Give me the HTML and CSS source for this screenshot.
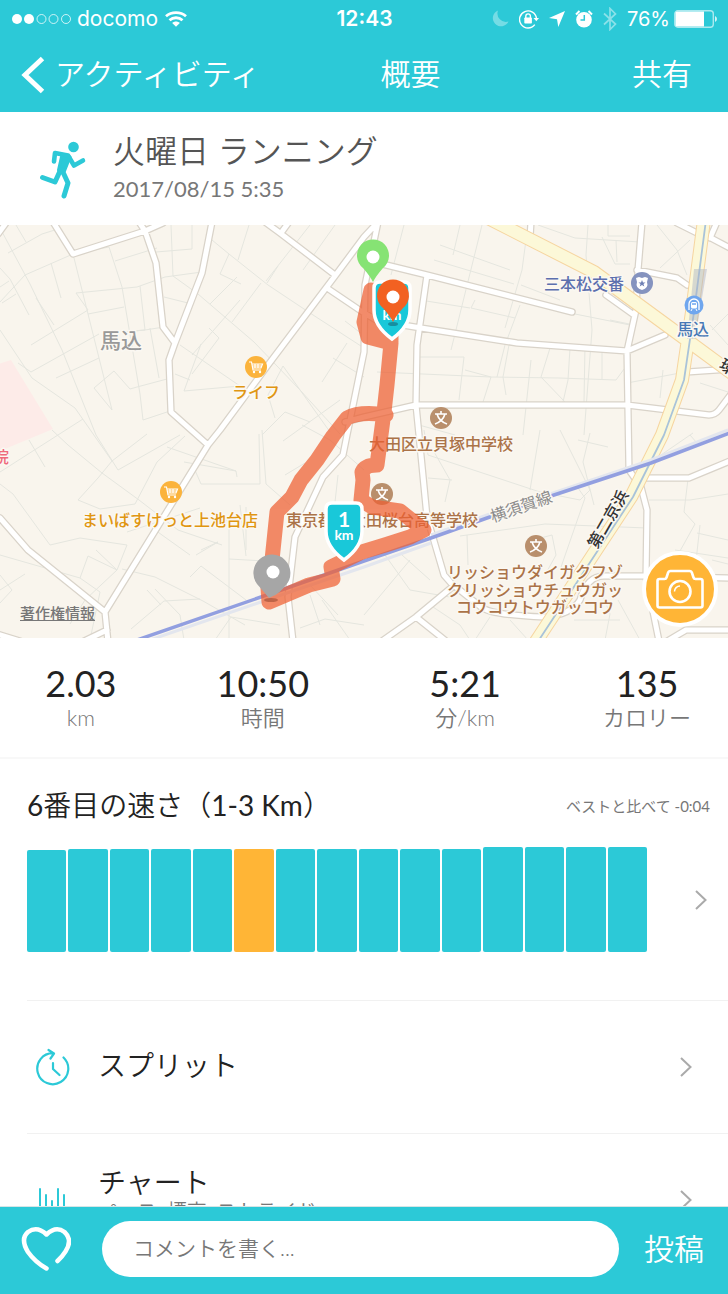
FILE: index.html
```html
<!DOCTYPE html>
<html lang="ja">
<head>
    <meta charset="UTF-8">
    <meta name="viewport" content="width=device-width, initial-scale=1.0">
    <title>概要</title>
    <link rel="stylesheet" href="styles.css">
</head>
<body>
    <header class="header">
        <div class="status-bar">
            <div class="status-left">
                <svg class="signal" width="60" height="12" viewBox="0 0 60 12">
                    <g fill="#fff"><circle cx="5" cy="6" r="5"/><circle cx="17" cy="6" r="5"/></g>
                    <g fill="none" stroke="#fff" stroke-opacity=".75"><circle cx="29.500" cy="6" r="4.500"/><circle cx="41.500" cy="6" r="4.500"/><circle cx="54" cy="6" r="4.500"/></g>
                </svg>
                <span>docomo</span>
                <svg class="wifi" width="22" height="16" viewBox="0 0 22 16" fill="none" stroke="#fff" stroke-width="2.800">
                    <path d="M1 5.200C6.500 .4 15.500 .4 21 5.200M4.500 9.300C8.200 5.900 13.800 5.900 17.500 9.300"/>
                    <path d="M11 15.800L7.200 12C9.300 10 12.700 10 14.800 12Z" fill="#fff" stroke="none"/>
                </svg>
            </div>
            <span class="time">12:43</span>
            <div class="status-right">
                <svg width="17" height="17" viewBox="0 0 17 17"><path d="M6 .5A8.200 8.200 0 1 0 16.500 11.500A8.500 8.500 0 0 1 6 .5Z" fill="#fff" opacity=".35"/></svg>
                <svg width="20" height="20" viewBox="0 0 20 20">
                    <path d="M15.800 15.600A8.500 8.500 0 1 1 17.500 9.500" fill="none" stroke="#fff" stroke-width="1.400"/>
                    <path d="M14.500 9H20L17.300 12.300Z" fill="#fff"/>
                    <rect x="5.300" y="8.500" width="7.600" height="6" rx=".8" fill="#fff"/>
                    <path d="M6.800 9V7.200a2.300 2.300 0 0 1 4.600 0V9" fill="none" stroke="#fff" stroke-width="1.400"/>
                </svg>
                <svg width="16" height="16" viewBox="0 0 16 16"><path d="M16 0L9.300 16L8 8.200L0 7Z" fill="#fff"/></svg>
                <svg width="18" height="18" viewBox="0 0 18 18">
                    <circle cx="9" cy="9.800" r="7.800" fill="#fff"/>
                    <path d="M1 4.500L4.500 1M17 4.500L13.500 1" stroke="#fff" stroke-width="2"/>
                    <path d="M9.300 5V10H5.500" fill="none" stroke="#2cc9d7" stroke-width="1.500"/>
                </svg>
                <svg width="14" height="24" viewBox="0 0 14 24"><path d="M1 6.500L12.500 17L7 22.500V1.500L12.500 7L1 17.500" fill="none" stroke="#fff" stroke-width="1.700" opacity=".45"/></svg>
                <span class="percent">76%</span>
                <svg width="43" height="18" viewBox="0 0 43 18">
                    <rect x=".8" y=".8" width="38.500" height="16.400" rx="3" fill="none" stroke="#fff" stroke-opacity=".6" stroke-width="1.400"/>
                    <path d="M3 1.500H30V16.500H3Q1.500 16.500 1.500 15V3Q1.500 1.500 3 1.500Z" fill="#fff"/>
                    <path d="M41 6Q43 7 43 9T41 12Z" fill="#fff" opacity=".8"/>
                </svg>
            </div>
        </div>
        <nav class="nav">
            <a class="back" href="#activity">
                <svg width="24" height="38" viewBox="0 0 24 38"><path d="M21.500 2.500L4 19L21.500 35.500" fill="none" stroke="#fff" stroke-width="5"/></svg>
                <span class="nav-label">アクティビティ</span>
            </a>
            <h1 class="nav-label">概要</h1>
            <button class="share nav-label" type="button">共有</button>
        </nav>
    </header>

    <main class="content">
        <section class="activity">
            <svg class="runner" width="48" height="60" viewBox="0 0 48 60" fill="none" stroke="#2cc9d7" stroke-linecap="round" stroke-linejoin="round">
                <circle cx="33.500" cy="8" r="5.300" fill="#2cc9d7" stroke="none"/>
                <path d="M14 22.500L15 14L28 16.500L34 26.500L43 21.500" stroke-width="4.600"/>
                <path d="M22 15.500L30 18L24.500 32L18.500 31Z" fill="#2cc9d7" stroke-width="3"/>
                <path d="M20.500 31L15 43L2.500 38.500M22 31L28 44L24 57" stroke-width="5"/>
            </svg>
            <div>
                <h2>火曜日 ランニング</h2>
                <p class="date">2017/08/15 5:35</p>
            </div>
        </section>

        <section class="map">
            <svg class="map-canvas" viewBox="0 225 728 413" preserveAspectRatio="xMidYMid slice">
                <rect y="225" width="728" height="413" fill="#f9f5ed"/>
                <path d="M-2 364L11 360L53 429L0 451Z" fill="#fdebe8"/>

                <!-- small streets -->
                <g fill="none" stroke="#e5e6df">
                    <path d="M0 228L30 284L62 350L96 435L118 470M0 302L25 275L73 254L109 247M16 225L26 242M8 253L42 234L58 229M0 268L10 279L29 315M2 303L16 294M9 281L0 287M31 345L88 310L76 293L137 287L165 277L202 272M0 330L32 378L75 408L112 461L147 434M51 263L61 298M73 254L112 410L94 388L114 371L130 389L137 387L167 379M109 247L122 287L140 394L143 420L170 411M115 261L157 248M88 314L124 307M18 363L31 372L99 334M54 325L36 298M56 378L99 358M140 286L145 330L122 332L145 330L164 327M150 328L159 378M164 297L188 303M171 225L173 276L198 294L254 342L300 390L340 434M192 225V249L156 252M212 240L229 254L220 274L241 284M249 225L238 260M229 254L268 285L310 313L364 348M237 277L210 304M261 283L232 322M278 266L267 283M310 225L266 281M335 225L303 270M175 374L190 380M180 345L240 386L184 391L201 344M209 328L219 338L192 374M240 300L192 355M283 366L330 432M283 366L268 395L275 418M262 435L285 412L310 422M347 343L322 382M345 321L362 334M333 358L364 377"/>
                    <path d="M0 484L13 494L50 545L80 538L127 545L117 570L88 556L80 578L0 555M29 440L45 467M0 472L83 419M52 430L68 445L102 473L139 500L178 530L222 545M78 500L100 509L135 504L157 462L185 436M112 461L98 478L78 500M118 470L180 435M184 462L236 471L237 477M167 447L236 471M194 468L201 484H260L259 434M262 430L266 484L290 505M211 511L229 522V640M240 505L246 556M201 550L218 542L196 555M190 577L201 566L246 600M127 532L200 508M122 569L155 577L203 601L245 625M96 550L117 570L85 600L70 624M80 578L100 592L90 640M0 590L25 574M0 603L12 590L0 575M131 629L164 601L200 599M155 530L190 555M155 589L180 615L184 640M161 605L147 590M215 640L231 617L280 625M246 507V550M229 559L265 561M302 425L330 440L364 470M283 441L340 400M285 475L305 463"/>
                    <path d="M404 225L391 275M440 245L510 270M434 260L514 284M482 225L451 350M505 328L522 270L528 225M521 285L560 300M570 313L630 325M538 225L575 238L640 242M588 225L586 255L592 330L584 435M608 225V236H630M602 237L615 264H630M616 240L617 262M471 308L515 318M475 300L471 308M520 305L505 345L497 377M419 357H464L459 400M465 370L491 377L559 378L616 380L627 365M377 372L491 377L483 402M509 345L503 377L506 395M550 348L541 377L565 402M570 348L568 380L563 402M585 345L584 402M602 350V380M627 383L680 373M610 320L634 325M663 370L660 398M657 225L677 250L687 275M690 240L660 268M419 425L455 435M710 325L728 345M712 330L728 314M700 383L728 392M460 225L453 255M531 360L523 435M420 300L470 308"/>
                    <path d="M424 430L428 455L540 492L580 500L590 490L560 430M433 450L450 480L445 502M428 478L452 480M590 433L583 462L594 505M540 430L530 490M578 440L608 447M467 535L468 565M460 536L545 524L647 528M364 615L410 560M385 555L410 590L450 597M402 555L430 580M533 540L552 535L556 555L545 575M578 488L585 498L560 570M661 455L693 433M649 500H690L728 494M688 479L684 512L695 524L675 560M697 533L728 540M700 525L695 570M675 550L728 558M690 435L697 443L728 430M712 560L728 564M574 620H620M600 588L610 614L605 640M618 600L640 640M490 617L475 640M510 620L528 640M430 605L460 625L470 640M300 628L325 619L364 625M322 600L350 640M310 595L320 625M310 585L338 615M338 475L333 520M340 520L364 530"/>
                </g>

                <!-- main streets, grey casing under white -->
                <defs>
                    <path id="roads" d="M6 223L-2 234M53 222L73 254L145 231L163 223M139 222L145 231L156 263L163 327L175 343L169 360L171 412L208 445M212 222L202 273L175 343M378 222L364 237L335 276L268 365L220 430L208 445L105 612L108 642M0 518L28 550L105 612M-3 634L20 641M80 643L107 630M265 222L280 233L335 275M289 222L281 233M327 288L364 313L378 321L421 328L517 343L627 351L665 335M374 262L427 275L572 312M427 275L417 345L416 405L419 435L427 517L444 575L451 583L481 607Q491 615 544 617Q571 615 580 600Q587 576 604 576H647L728 578M345 422L364 417L416 405H627L709 415Q715 415 719 410L732 393M642 222L638 270L636 310L627 351L629 470L641 487L647 510L646 577L659 641M606 295L634 315M637 270L677 278L687 285M677 223L697 233M709 237L730 248M717 222L710 238M687 372L730 369M531 222L530 238M646 478H689L730 461M382 641L416 617L451 588M416 617L446 641M664 643L686 630H730M378 222L365 285L364 352L347 435L343 455L323 477L295 537L288 597L293 641"/>
                    <path id="highways" d="M486 217L594 272L684 338L737 377M704 220L692 312L682 380L662 435L631 497L535 643"/>
                </defs>
                <g fill="none" stroke-linecap="round" stroke-linejoin="round">
                    <use href="#roads" stroke="#d9d3c9" stroke-width="7.500"/>
                    <use href="#roads" stroke="#fff" stroke-width="5"/>
                    <use href="#highways" stroke="#f6d5a0" stroke-width="14"/>
                    <use href="#highways" stroke="#fcf8d8" stroke-width="12"/>
                    <path d="M706 220L694 312L684 380L664 435L633 497L537 643" stroke="#a9c3d9" stroke-width="1.800"/>
                </g>
                <path d="M694 269H707L695 339H687Z" fill="#a9b2c5" opacity=".45"/>

                <!-- railway -->
                <path d="M150 640L287 593L364 567L431 543M431 535L487 515L651 460L728 430" fill="none" stroke="#e3e6ee" stroke-width="3"/>
                <path d="M137 640L287 588L364 561L431 538L487 518L554 495L651 463L732 432" fill="none" stroke="#929fe0" stroke-width="3.500"/>

                <g class="map-text">
                    <text class="place" x="121" y="348">馬込</text>
                    <text class="shop" x="256" y="398">ライフ</text>
                    <text class="shop" x="170" y="526">まいばすけっと上池台店</text>
                    <text class="police" x="584" y="290">三本松交番</text>
                    <text class="station" x="693" y="335">馬込</text>
                    <text class="school" x="441" y="450">大田区立貝塚中学校</text>
                    <text class="school" x="382" y="526">東京都立大田桜台高等学校</text>
                    <text class="school" x="535" y="578">リッショウダイガクフゾ</text>
                    <text class="school" x="535" y="596">クリッショウチュウガッ</text>
                    <text class="school" x="535" y="613">コウコウトウガッコウ</text>
                    <text class="hospital" x="1" y="463">院</text>
                    <text class="rail" transform="translate(523 512) rotate(-19)">横須賀線</text>
                    <text class="highway" transform="translate(613 522) rotate(-60)">第二京浜</text>
                    <text class="highway" transform="translate(725 372) rotate(30)">環</text>
                </g>

                <!-- points of interest -->
                <defs>
                    <g id="shop">
                        <circle r="11" fill="#fbb33c"/>
                        <path d="M-7 -5H-4.500L-3 3H5M-4 -3H6.500L5 1H-3M-1 -3V1M2 -3V1M-4 -1H6" fill="none" stroke="#fff" stroke-width="1.200"/>
                        <circle cx="-2" cy="5" r="1.200" fill="#fff"/><circle cx="4" cy="5" r="1.200" fill="#fff"/>
                    </g>
                    <g id="school">
                        <circle r="11" fill="#b98f6c"/>
                        <path d="M0 -7V-4M-6 -4H6M-4 -4Q-2 3 6 6M4 -4Q2 3 -6 6" fill="none" stroke="#fff" stroke-width="1.600"/>
                    </g>
                </defs>
                <use href="#shop" x="256" y="367"/>
                <use href="#shop" x="171" y="492"/>
                <use href="#school" x="441" y="418"/>
                <use href="#school" x="382" y="494"/>
                <use href="#school" x="536" y="546"/>
                <g transform="translate(642 283)">
                    <circle r="11" fill="#8593bf"/>
                    <path d="M-6 -5L-3 -6L0 -5L3 -6L6 -5L5 -1Q7 5 0 7Q-7 5 -5 -1Z" fill="#fff"/>
                    <path d="M0 -3L1 -.5H3.500L1.500 1L2.300 3.500L0 2L-2.300 3.500L-1.500 1L-3.500 -.5H-1Z" fill="#6f80b4"/>
                </g>
                <g transform="translate(694 305)">
                    <circle r="9.500" fill="#6fa6ee"/>
                    <path d="M-5 5V-1A5 5 0 0 1 5 -1V5" fill="none" stroke="#fff" stroke-width="1.300"/>
                    <rect x="-3" y="-3" width="6" height="6.500" rx="1.500" fill="#fff"/>
                    <path d="M-2 -1H2" stroke="#6fa6ee" stroke-width="1.500"/>
                    <path d="M-2 4L-3 6M2 4L3 6" stroke="#fff"/>
                </g>

                <!-- run track -->
                <g fill="none" stroke="#ee5f32" stroke-width="15" stroke-linejoin="round" stroke-linecap="round" opacity=".72">
                    <path d="M371 290L364 322L368 337L391 343L387 385L384 412L377 465Q365 465 362 472L363 480L361 500L372 507L400 511L424 530L410 537L385 545L362 552L331 567L333 579L309 585L269 602L268 588L272 560L277 512L292 497L301 480L317 460L333 436L347 418Q360 411 386 415"/>
                    <path d="M375 290L374 322L391 340V315"/>
                </g>

                <!-- kilometre shields and pins -->
                <defs>
                    <path id="shield" d="M-12 -28H12Q18 -28 18 -22V0Q18 16 0 29Q-18 16 -18 0V-22Q-18 -28 -12 -28Z" fill="#19c8d9" stroke="#fff" stroke-width="3.500"/>
                    <path id="pin" d="M0 25Q-3 19 -10 11A16 16 0 1 1 10 11Q3 19 0 25Z"/>
                </defs>
                <g class="shield-text">
                    <use href="#shield" x="344" y="531"/>
                    <text class="number" x="344" y="527">1</text>
                    <text class="unit" x="344" y="540">km</text>
                    <use href="#shield" x="392" y="310"/>
                    <text class="unit" x="392" y="320">km</text>
                </g>
                <ellipse cx="393" cy="324" rx="5" ry="2" fill="#168fa0"/>
                <ellipse cx="271" cy="600" rx="7" ry="2" fill="#9d4c34" opacity=".6"/>
                <use href="#pin" x="373" y="257" fill="#86e374"/>
                <circle cx="373" cy="257" r="6.500" fill="#fff"/>
                <use href="#pin" x="393" y="297" fill="#f26122"/>
                <circle cx="393" cy="297" r="6.500" fill="#fff"/>
                <path d="M269 598Q264 592 257 584A18.500 18.500 0 1 1 286 585Q279 594 273 596Z" fill="#a6a6a6"/>
                <circle cx="273" cy="572" r="6.500" fill="#fff"/>
            </svg>
            <a class="legal" href="#legal">著作権情報</a>
            <button class="camera" type="button" aria-label="写真を撮る">
                <svg width="48" height="40" viewBox="0 0 48 40" fill="none" stroke="#fff" stroke-width="2.600" stroke-linejoin="round">
                    <path d="M3.500 10H8.500Q10 10 10.500 8.500L12 4Q12.500 2 14.500 2H33.500Q35.500 2 36 4L37.500 8.500Q38 10 39.500 10H44.500Q46.500 10 46.500 12V36.500Q46.500 38.500 44.500 38.500H3.500Q1.500 38.500 1.500 36.500V12Q1.500 10 3.500 10Z"/>
                    <circle cx="24" cy="22.500" r="10.500"/>
                    <path d="M18.500 22.500A5.500 5.500 0 0 1 24 17" stroke-width="1.500"/>
                </svg>
            </button>
        </section>

        <section class="stats">
            <div class="stat"><strong>2.03</strong><span>km</span></div>
            <div class="stat"><strong>10:50</strong><span>時間</span></div>
            <div class="stat"><strong>5:21</strong><span>分/km</span></div>
            <div class="stat"><strong>135</strong><span>カロリー</span></div>
        </section>

        <section class="ranking">
            <div class="ranking-head">
                <h3><b>6</b>番目の速さ（<b>1-3 Km</b>）</h3>
                <p>ベストと比べて -0:04</p>
            </div>
            <a class="ranking-body" href="#ranking" aria-label="ランキング">
                <div class="bars">
                    <span class="bar" style="height: 102px"></span>
                    <span class="bar" style="height: 103px"></span>
                    <span class="bar" style="height: 103px"></span>
                    <span class="bar" style="height: 103px"></span>
                    <span class="bar" style="height: 103px"></span>
                    <span class="bar current" style="height: 103px"></span>
                    <span class="bar" style="height: 103px"></span>
                    <span class="bar" style="height: 103px"></span>
                    <span class="bar" style="height: 103px"></span>
                    <span class="bar" style="height: 103px"></span>
                    <span class="bar" style="height: 103px"></span>
                    <span class="bar" style="height: 105px"></span>
                    <span class="bar" style="height: 105px"></span>
                    <span class="bar" style="height: 105px"></span>
                    <span class="bar" style="height: 105px"></span>
                </div>
                <svg class="chevron" width="12" height="20" viewBox="0 0 12 20"><path d="M1 1L10.500 10L1 19"/></svg>
            </a>
        </section>

        <a class="row" href="#splits">
            <svg class="row-icon" width="36" height="38" viewBox="0 0 36 38" fill="none" stroke="#2cc9d7" stroke-width="2.200" stroke-linecap="round" stroke-linejoin="round">
                <path d="M28.500 9.500A15.500 15.500 0 1 1 18 5.200M13.500 2L19 5.500L15.500 10.500M18 15V21L24.500 27"/>
            </svg>
            <span class="row-title">スプリット</span>
            <svg class="chevron" width="12" height="20" viewBox="0 0 12 20"><path d="M1 1L10.500 10L1 19"/></svg>
        </a>
        <a class="row" href="#charts">
            <svg class="row-icon" width="36" height="28" viewBox="0 0 36 28" stroke="#2cc9d7" stroke-width="2" stroke-linecap="round">
                <path d="M5 3V26M11 9V26M17 15V26M23 3V26M29 9V26"/>
            </svg>
            <span class="row-title">チャート<small>ペース, 標高, ストライド</small></span>
            <svg class="chevron" width="12" height="20" viewBox="0 0 12 20"><path d="M1 1L10.500 10L1 19"/></svg>
        </a>
    </main>

    <form class="comment-bar">
        <button class="like" type="button" aria-label="いいね">
            <svg width="50" height="46" viewBox="0 0 50 46" fill="none" stroke="#fff" stroke-width="4.500" stroke-linecap="round" stroke-linejoin="round">
                <path d="M25.500 42.500Q14 36 7 26Q-1 13 7 6Q16 -.5 25.500 8.500Q35 -.5 43.500 6Q52 14 44.500 25.500Q41 31 36.500 35"/>
            </svg>
        </button>
        <input type="text" placeholder="コメントを書く..." aria-label="コメント">
        <button class="post" type="submit">投稿</button>
    </form>
</body>
</html>
```
FILE: styles.css
```css
:root {
    --primary: #2cc9d7;
    --accent: #ffb536;
    --dark: #222;
    --gray: #777;
    --line: #f1f1f1;
}

* {
    margin: 0;
    padding: 0;
    box-sizing: border-box;
}

body {
    height: 100vh;
    display: flex;
    flex-direction: column;
    background: #fff;
    color: var(--dark);
    font-family: Lato, 'Noto Sans CJK JP', sans-serif;
    font-weight: 350;
}

a {
    color: inherit;
    text-decoration: none;
}

button {
    border: none;
    background: none;
    color: inherit;
    font: inherit;
    cursor: pointer;
}

svg {
    display: block;
    flex-shrink: 0;
}

h1, h2, h3 {
    font-weight: 350;
}

/* header */
.header {
    background: var(--primary);
    color: #fff;
}

.status-bar {
    display: grid;
    grid-template-columns: 1fr auto 1fr;
    align-items: center;
    height: 37px;
    padding: 0 11px 0 12px;
    font-family: Inter, sans-serif;
    font-size: 21px;
    font-weight: 400;
}

.status-left,
.status-right {
    display: flex;
    align-items: center;
}

.status-left {
    gap: 5px;
}

.wifi {
    margin-left: 2px;
}

.status-right {
    justify-content: flex-end;
    gap: 10px;
}

.percent {
    margin-right: -6px;
    font-size: 20px;
}

.time {
    font-weight: 600;
}

.nav {
    display: grid;
    grid-template-columns: 10fr auto 7fr;
    align-items: center;
    height: 75px;
    padding: 0 36px 0 21px;
    font-size: 30px;
}

.nav h1 {
    font-size: 30px;
}

.nav-label {
    padding-bottom: 6px;
}

.back {
    display: flex;
    align-items: center;
    gap: 10px;
}

.share {
    justify-self: end;
}

/* content */
.content {
    flex: 1;
    min-height: 0;
    overflow: hidden;
}

.activity {
    display: flex;
    align-items: center;
    gap: 25px;
    height: 113px;
    padding: 0 40px;
}

.activity h2 {
    color: #555;
    font-size: 32px;
    line-height: 40px;
}

.date {
    color: var(--gray);
    font-size: 22px;
    font-weight: 400;
    line-height: 36px;
}

.map {
    position: relative;
    height: 413px;
    overflow: hidden;
}

.map-canvas {
    width: 100%;
    height: 100%;
}

.map-text {
    font-family: 'Noto Sans CJK JP', sans-serif;
    font-size: 16px;
    font-weight: 500;
    text-anchor: middle;
    paint-order: stroke;
    stroke: #fbf8f2;
    stroke-width: 3px;
    stroke-linejoin: round;
}

.place {
    fill: #999;
    font-size: 21px;
}

.shop {
    fill: #e09612;
}

.police {
    fill: #5c6fae;
}

.station {
    fill: #4878b6;
}

.school {
    fill: #ab7348;
}

.hospital {
    fill: #ef6a7c;
}

.rail {
    fill: #8b8b8b;
    font-weight: 400;
}

.highway {
    fill: #333;
}

.shield-text {
    fill: #fff;
    font-weight: 700;
    text-anchor: middle;
}

.number {
    font-size: 21px;
}

.unit {
    font-size: 14px;
}

.legal {
    position: absolute;
    left: 20px;
    bottom: 14px;
    color: #777;
    font-size: 15px;
    font-weight: 500;
    line-height: 22px;
    text-decoration: underline;
}

.camera {
    position: absolute;
    right: 10px;
    bottom: 11px;
    display: flex;
    justify-content: center;
    align-items: center;
    width: 76px;
    height: 76px;
    border: 4px solid #fff;
    border-radius: 50%;
    background: var(--accent);
}

.stats {
    display: grid;
    grid-template-columns: 4fr 5fr 5fr 4fr;
    align-items: center;
    height: 121px;
    padding-top: 2px;
    border-bottom: 2px solid #f8f8f8;
    text-align: center;
}

.stat strong {
    display: block;
    font-size: 36px;
    font-weight: 400;
    line-height: 38px;
}

.stat span {
    display: block;
    color: var(--gray);
    font-size: 22px;
    line-height: 32px;
}

.ranking {
    height: 241px;
    padding: 24px 18px 0 27px;
}

.ranking-head {
    display: flex;
    justify-content: space-between;
    align-items: center;
}

.ranking-head h3 {
    font-size: 28px;
    line-height: 44px;
}

.ranking-head b {
    font-weight: 400;
}

.ranking-head p {
    color: var(--gray);
    font-size: 15px;
    font-weight: 400;
}

.ranking-body {
    display: flex;
    align-items: center;
    gap: 48px;
    margin-top: 20px;
    padding-right: 3px;
}

.bars {
    flex: 1;
    display: flex;
    align-items: flex-end;
    gap: 2px;
}

.bar {
    flex: 1;
    border-radius: 2px;
    background: var(--primary);
}

.bar.current {
    background: var(--accent);
}

.chevron {
    fill: none;
    stroke: #aaa;
    stroke-width: 2px;
}

.row {
    display: flex;
    align-items: center;
    height: 133px;
    margin-left: 27px;
    padding: 0 36px 0 8px;
    border-top: 1px solid var(--line);
}

.row-icon {
    margin-right: 27px;
}

.row-title {
    flex: 1;
    padding-bottom: 4px;
    font-size: 28px;
    line-height: 36px;
}

.row-title small {
    display: block;
    margin-bottom: 10px;
    color: var(--gray);
    font-size: 20px;
    line-height: 22px;
}

/* comment bar */
.comment-bar {
    display: flex;
    align-items: center;
    height: 88px;
    padding: 0 24px 3px 21px;
    border-top: 1px solid #d5e5e6;
    background: var(--primary);
    color: #fff;
}

.comment-bar input {
    flex: 1;
    min-width: 0;
    height: 56px;
    margin: 0 25px 0 31px;
    padding: 0 31px 4px;
    border: none;
    border-radius: 28px;
    outline: none;
    background: #fff;
    color: var(--dark);
    font: inherit;
    font-size: 21px;
}

.comment-bar input::placeholder {
    color: var(--gray);
}

.post {
    padding-bottom: 4px;
    font-size: 30px;
}
```
